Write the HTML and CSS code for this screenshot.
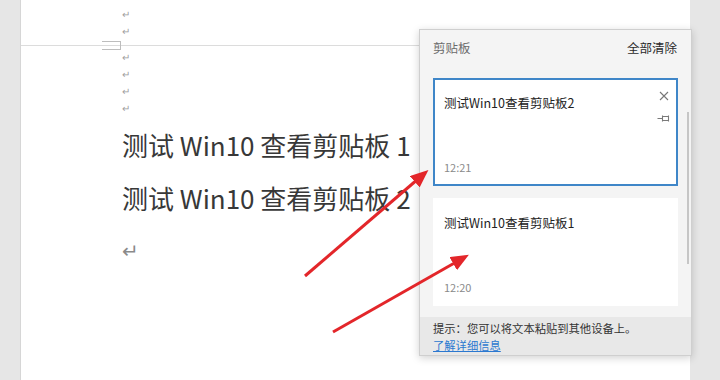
FILE: index.html
```html
<!DOCTYPE html>
<html lang="zh-CN">
<head>
    <meta charset="UTF-8">
    <title>剪贴板</title>
    <link rel="stylesheet" href="styles.css">
</head>
<body>
    <div class="window">
        <div class="gutter"></div>

        <div class="page">
            <div class="marks top-marks">
                <div class="mark">↵</div>
                <div class="mark">↵</div>
                <div class="mark">↵</div>
            </div>
            <div class="crop-mark"></div>
            <div class="marks bottom-marks">
                <div class="mark">↵</div>
                <div class="mark">↵</div>
                <div class="mark">↵</div>
                <div class="mark">↵</div>
            </div>

            <p class="doc-line">测试 Win10 查看剪贴板 1</p>
            <p class="doc-line">测试 Win10 查看剪贴板 2</p>
            <div class="doc-mark">↵</div>

            <!-- clipboard history flyout -->
            <div class="clipboard">
                <div class="clip-header">
                    <span class="clip-title">剪贴板</span>
                    <span class="clip-clear">全部清除</span>
                </div>
                <div class="clip-list">
                    <div class="clip-item selected">
                        <div class="clip-body">
                            <div class="clip-text">测试Win10查看剪贴板2</div>
                            <div class="clip-time">12:21</div>
                        </div>
                        <div class="clip-actions">
                            <svg width="10" height="10" viewBox="0 0 10 10"><path d="M1 1 L9 9 M9 1 L1 9" stroke="#777" stroke-width="1.1" fill="none"/></svg>
                            <svg width="13" height="9" viewBox="0 0 13 9"><path d="M0.5 4.5 H5.5 M5.5 1.5 V7.5 M5.5 2.5 H11.5 V6.5 H5.5 M11.5 1.5 V7.5" stroke="#7a7a7a" stroke-width="1.1" fill="none"/></svg>
                        </div>
                    </div>
                    <div class="clip-item">
                        <div class="clip-body">
                            <div class="clip-text">测试Win10查看剪贴板1</div>
                            <div class="clip-time">12:20</div>
                        </div>
                    </div>
                    <div class="scrollbar"></div>
                </div>
                <div class="clip-footer">
                    <div class="clip-tip">提示：您可以将文本粘贴到其他设备上。</div>
                    <a href="#" class="clip-link">了解详细信息</a>
                </div>
            </div>

            <svg class="arrows" width="670" height="380" viewBox="20 0 670 380">
                <defs>
                    <marker id="head" markerWidth="6" markerHeight="5" refX="4.5" refY="2.5" orient="auto" markerUnits="strokeWidth">
                        <path d="M0 0 L6 2.5 L0 5 Z" fill="#e3262a"/>
                    </marker>
                </defs>
                <line x1="304" y1="276" x2="424" y2="173" stroke="#e3262a" stroke-width="3" marker-end="url(#head)"/>
                <line x1="332" y1="332" x2="464" y2="257" stroke="#e3262a" stroke-width="3" marker-end="url(#head)"/>
            </svg>
        </div>

        <div class="side"></div>
    </div>
</body>
</html>
```

FILE: styles.css
```css
body {
    margin: 0;
    font-family: "Noto Sans CJK SC", "Noto Sans", sans-serif;
}
.window {
    display: flex;
    width: 720px;
    height: 380px;
    overflow: hidden;
    background: #e6e6e6;
}
.gutter {
    width: 20px;
    background: #e6e6e6;
    border-right: 1px solid #d6d6d6;
}
.page {
    position: relative;
    flex: 1;
    background: white;
    padding-left: 101px;
}
.side {
    width: 30px;
    background: #e6e6e6;
}
.marks {
    display: flex;
    flex-direction: column;
}
.top-marks {
    height: 46px;
    justify-content: flex-end;
    padding-bottom: 6px;
    box-sizing: border-box;
    overflow: hidden;
    border-bottom: 1px solid #dcdcdc;
    margin-left: -101px;
    padding-left: 101px;
}
.bottom-marks {
    padding-top: 2px;
}
.mark {
    height: 17px;
    line-height: 17px;
    font-size: 10px;
    color: #a0a0a0;
}
.crop-mark {
    position: absolute;
    left: 81px;
    top: 41px;
    width: 18px;
    height: 7px;
    border: 1px solid #bdbdbd;
    border-left: none;
}
.doc-line {
    margin: 0;
    font-size: 26px;
    line-height: 53px;
    color: #383838;
    white-space: nowrap;
}
.doc-line:first-of-type {
    margin-top: 2px;
}
.doc-mark {
    margin-top: 14px;
    font-size: 20px;
    line-height: 24px;
    color: #8a8a8a;
}
.clipboard {
    position: absolute;
    left: 398px;
    top: 29px;
    width: 271px;
    background: #f4f4f4;
    border: 1px solid #cfcfcf;
    box-shadow: 0 2px 8px rgba(0,0,0,0.18);
    font-size: 12.5px;
}
.clip-header {
    display: flex;
    justify-content: space-between;
    align-items: center;
    height: 34px;
    padding: 0 14px 0 13px;
}
.clip-title {
    color: #6b6b6b;
}
.clip-clear {
    color: #2b2b2b;
}
.clip-list {
    position: relative;
    display: flex;
    flex-direction: column;
    gap: 12px;
    padding: 14px 13px 11px 13px;
}
.clip-item {
    display: flex;
    height: 108px;
    box-sizing: border-box;
    background: white;
    border: 2px solid transparent;
}
.clip-item.selected {
    border-color: #3f86c8;
}
.clip-body {
    flex: 1;
    display: flex;
    flex-direction: column;
    justify-content: space-between;
    padding: 15px 9px 10px 9px;
}
.clip-text {
    line-height: 16px;
    color: #222;
}
.clip-time {
    font-size: 11px;
    line-height: 14px;
    color: #8a8a8a;
}
.clip-actions {
    display: flex;
    flex-direction: column;
    align-items: center;
    gap: 13px;
    padding: 11px 6px 0 0;
}
.scrollbar {
    position: absolute;
    right: 2px;
    top: 48px;
    width: 2px;
    height: 152px;
    background: #c6c6c6;
}
.clip-footer {
    background: #e8e8e8;
    padding: 3px 13px 0 13px;
    height: 35px;
    font-size: 11.3px;
    line-height: 17px;
    color: #333;
}
.clip-tip {
    height: 17px;
}
.clip-link {
    display: inline-block;
    line-height: 15px;
    color: #2b78d0;
    text-decoration: underline;
}
.arrows {
    position: absolute;
    left: 0;
    top: 0;
    pointer-events: none;
}
```
